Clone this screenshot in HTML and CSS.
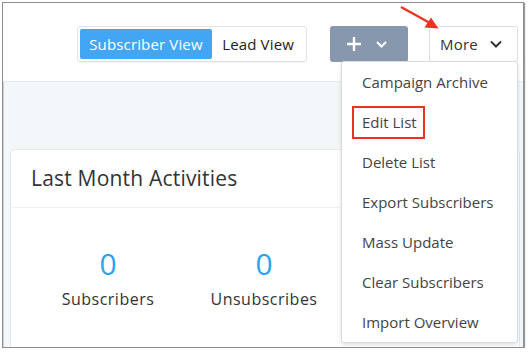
FILE: index.html
```html
<!DOCTYPE html>
<html>
<head>
<meta charset="utf-8">
<link rel="stylesheet" href="styles.css">
</head>
<body>
<div class="frame">
  <header class="topbar">
    <div class="toggle">
      <span class="seg active">Subscriber View</span>
      <span class="seg">Lead View</span>
    </div>
    <div class="add">
      <svg class="plus" width="16" height="16" viewBox="0 0 16 16"><path d="M8 1v14M1 8h14" stroke="#fff" stroke-width="2.4" fill="none"/></svg>
      <svg class="chev" width="11" height="7" viewBox="0 0 11 7"><path d="M1 1l4.5 4.5L10 1" stroke="#fff" stroke-width="2" fill="none"/></svg>
    </div>
    <div class="more-wrap">
      <div class="more">
        <span>More</span>
        <svg class="chev" width="12" height="8" viewBox="0 0 12 8"><path d="M1 1.5l5 5 5-5" stroke="#333" stroke-width="2" fill="none"/></svg>
      </div>
      <ul class="menu">
        <li>Campaign Archive</li>
        <li><span class="marked">Edit List</span></li>
        <li>Delete List</li>
        <li>Export Subscribers</li>
        <li>Mass Update</li>
        <li>Clear Subscribers</li>
        <li>Import Overview</li>
      </ul>
    </div>
  </header>
  <main class="content">
    <section class="card">
      <h2 class="card-title">Last Month Activities</h2>
      <div class="stats">
        <div class="stat"><div class="num">0</div><div class="label">Subscribers</div></div>
        <div class="stat"><div class="num">0</div><div class="label">Unsubscribes</div></div>
      </div>
    </section>
  </main>
  <svg class="arrow" width="50" height="30" viewBox="0 0 50 30">
    <path d="M1 2L30 18" stroke="#ea3323" stroke-width="2.4" fill="none"/>
    <path d="M38.5 23.5L24.5 22.5L31 12.5Z" fill="#ea3323"/>
  </svg>
</div>
</body>
</html>
```
FILE: styles.css
```css
* { box-sizing: border-box; }
body {
  margin: 0;
  background: #fff;
  font-family: "Open Sans", "Liberation Sans", sans-serif;
}
.frame {
  position: relative;
  margin: 2px 0 0 2px;
  width: 522px;
  height: 346px;
  border: 1px solid #8d8d8d;
  box-shadow: 1px 1px 1px #9a9a9a, inset 1px 1px 0 #d0d0d0;
  overflow: hidden;
  background: #f3f7fa;
}
.topbar {
  height: 79px;
  background: #fff;
  border-bottom: 1px solid #e6ecf1;
  display: flex;
  justify-content: flex-end;
  align-items: flex-start;
  padding: 23px 5px 0 0;
}
.toggle {
  display: flex;
  height: 36px;
  padding: 2px;
  border: 1px solid #dde3e9;
  border-radius: 3px;
  box-shadow: 0 1px 1px rgba(0,0,0,.05);
}
.seg {
  font-size: 15px;
  letter-spacing: 0.15px;
  line-height: 30px;
  padding: 0 10px 0 10px;
  color: #222;
  border-radius: 2px;
}
.seg.active {
  background: #42a6f5;
  color: #fff;
  width: 132px;
  padding: 0 0 0 9px;
}
.add {
  margin-left: 23px;
  width: 78px;
  height: 36px;
  background: #8697ae;
  border-radius: 3px;
  display: flex;
  align-items: center;
  padding-left: 16px;
}
.add .chev { margin-left: 14px; }
.more-wrap {
  position: relative;
  margin-left: 21px;
}
.more {
  width: 89px;
  height: 36px;
  border: 1px solid #d9dfe5;
  border-radius: 3px;
  background: #fff;
  display: flex;
  align-items: center;
  padding-left: 10px;
  font-size: 15px;
  letter-spacing: 0.2px;
  color: #333;
}
.more .chev { margin-left: 12px; }
.menu {
  position: absolute;
  top: 35px;
  right: 0;
  width: 177px;
  margin: 0;
  padding: 0;
  list-style: none;
  background: #fff;
  border: 1px solid #d6dce2;
  border-radius: 3px;
  box-shadow: 0 2px 4px rgba(0,0,0,.12);
  z-index: 2;
}
.menu li {
  height: 40px;
  line-height: 40px;
  padding-left: 20px;
  font-size: 15px;
  color: #444;
}
.marked {
  display: inline-block;
  margin-left: -10px;
  padding: 0 6px 0 8px;
  line-height: 29px;
  border: 2px solid #e8331f;
}
.content {
  padding: 67px 0 0 7px;
}
.card {
  width: 510px;
  height: 220px;
  background: #fff;
  border: 1px solid #e3e9ee;
  border-radius: 5px;
}
.card-title {
  margin: 0;
  height: 58px;
  line-height: 56px;
  padding-left: 20px;
  font-size: 21px;
  letter-spacing: 0.2px;
  font-weight: 400;
  color: #333;
  border-bottom: 1px solid #eef2f5;
}
.stats {
  display: flex;
  padding: 38px 0 0 19px;
}
.stat {
  width: 156px;
  text-align: center;
}
.num {
  font-size: 30px;
  line-height: 36px;
  color: #2ba3ef;
}
.label {
  margin-top: 7px;
  font-size: 16px;
  letter-spacing: 0.5px;
  line-height: 20px;
  color: #333;
}
.arrow {
  position: absolute;
  left: 397px;
  top: 2px;
}
```
